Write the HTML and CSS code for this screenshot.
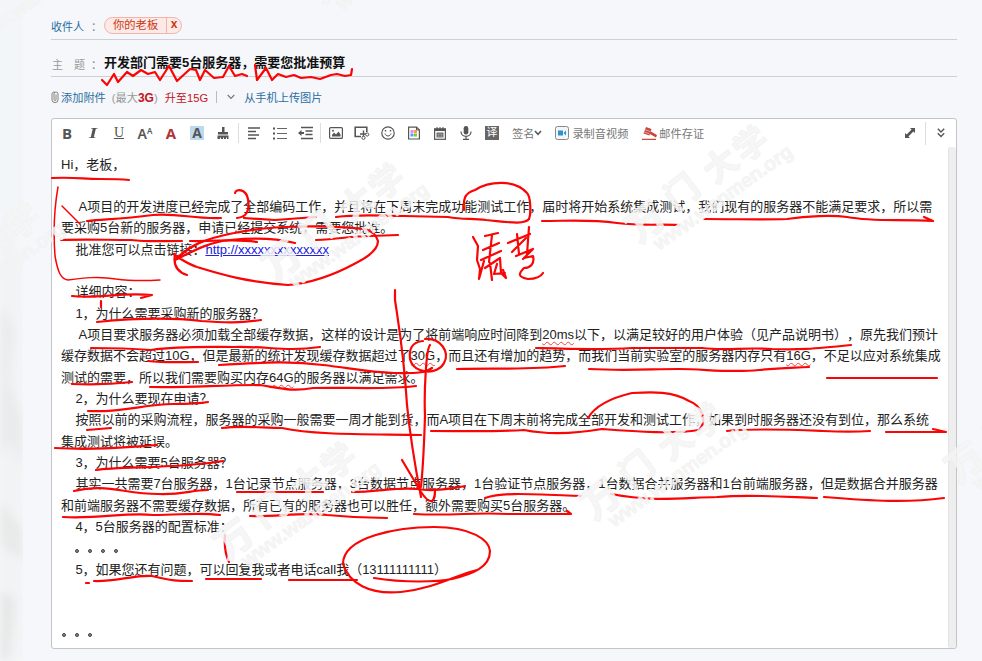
FILE: index.html
```html
<!DOCTYPE html>
<html lang="zh-CN">
<head>
<meta charset="utf-8">
<title>写信</title>
<link rel="stylesheet" href="styles.css">
</head>
<body>
<div class="page">
  <aside class="scenery">
    <svg width="23" height="661" viewBox="0 0 23 661">
      <defs><filter id="soft"><feGaussianBlur stdDeviation="4"/></filter></defs>
      <g filter="url(#soft)">
        <path d="M0 215 L12 235 L23 270 V661 H0Z" fill="#f1f3f4"/>
        <path d="M0 300 L14 330 L8 380 L23 420 V470 L10 440 L0 460Z" fill="#e9ebec"/>
        <path d="M0 500 L23 530 V560 L0 545Z" fill="#e8eaea"/>
        <path d="M0 590 L16 600 L8 661 H0Z" fill="#e6e8e8"/>
      </g>
    </svg>
  </aside>
  <main class="compose">
    <div class="row row-to">
      <span class="label link">收件人</span><span class="colon">：</span>
      <span class="chip"><span class="chip-name">你的老板</span><span class="chip-x">x</span></span>
    </div>
    <div class="row row-subject">
      <span class="label spread"><span>主</span><span>题</span></span><span class="colon">：</span>
      <strong class="subject">开发部门需要5台服务器，需要您批准预算</strong>
    </div>
    <div class="attach">
      <svg class="clip" width="8" height="12" viewBox="0 0 8 12"><path d="M1 3v6a3 2.6 0 0 0 6 0V3a2 2 0 0 0-4 0v5.500a1 1 0 0 0 2 0V3.500M1 3a2 2 0 0 1 3-1.700" fill="none" stroke="#777" stroke-width=".9"/></svg>
      <span class="link">添加附件</span>
      <span class="limit">(最大<b>3G</b>)</span>
      <span class="upgrade">升至15G</span>
      <span class="bar"></span>
      <svg class="chev" width="8" height="6" viewBox="0 0 8 6"><path d="M.7 1 4 4.300 7.300 1" fill="none" stroke="#777" stroke-width="1.200"/></svg>
      <span class="link">从手机上传图片</span>
    </div>
    <section class="editor">
      <div class="toolbar">
        <span class="tool bold">B</span>
        <span class="tool italic">I</span>
        <span class="tool under">U</span>
        <span class="tool size">A<sup>A</sup></span>
        <span class="tool color">A</span>
        <span class="tool"><span class="mark">A</span></span>
        <span class="tool"><svg width="12" height="14" viewBox="1 0 12 14" fill="#555"><path d="M6 1h2.500v5H12v2.500H2V6h4zM1.500 9.500h11V13H11v-1.500h-1V13H8v-1.500H7V13H5v-1.500H4V13H1.500z"/></svg></span>
        <span class="sep"></span>
        <span class="tool"><svg width="14" height="14" viewBox="0 0 14 14"><path d="M1 2h12M1 5.500h8M1 9h11M1 12.500h8" stroke="#555" stroke-width="1.700"/></svg></span>
        <span class="tool"><svg width="14" height="14" viewBox="0 0 14 14"><path d="M4 2.500h10M4 7.500h10M4 12.500h10" stroke="#666" stroke-width="1.200"/><path d="M0 2.500h2M0 7.500h2M0 12.500h2" stroke="#555" stroke-width="2"/></svg></span>
        <span class="tool narrow"><svg width="15" height="14" viewBox="0 0 15 14"><path d="M3 1.500h12M7.500 5h7M7.500 8.500h7M3 12.500h12" stroke="#555" stroke-width="1.600"/><path d="M0 7l3.500-3v2H6v2H3.500v2z" fill="#555"/></svg></span>
        <span class="sep"></span>
        <span class="tool"><svg width="14" height="12" viewBox="0 0 14 12"><rect x=".6" y=".6" width="12.800" height="10.800" rx="1" fill="#fff" stroke="#555" stroke-width="1.200"/><path d="M3 9.500V8l2-2.500 2 2 2.500-3 2 3v2z" fill="#555"/><circle cx="4" cy="3.700" r="1" fill="#555"/></svg></span>
        <span class="tool"><svg width="16" height="14" viewBox="0 0 16 14"><path d="M7 10.500H1.200V1.200h11.600V6" fill="none" stroke="#555" stroke-width="1.600"/><path d="M9.500 4.500v7M6 8h7" stroke="#555" stroke-width="1.400"/><circle cx="13.200" cy="8.500" r="1.600" fill="#fff" stroke="#555"/><circle cx="9.500" cy="11.800" r="1.600" fill="#fff" stroke="#555"/></svg></span>
        <span class="tool"><svg width="14" height="14" viewBox="0 0 14 14" fill="none" stroke="#555"><circle cx="7" cy="7" r="6.200" stroke-width="1.200"/><path d="M4 7.500c.5 3.300 5.500 3.300 6 0"/><path d="M4.500 4v1.500M9.500 4v1.500" stroke-width="1.400"/></svg></span>
        <span class="tool"><svg width="12" height="14" viewBox="0 0 12 14"><path d="M.6 1.200h8L11.400 4v9H.6z" fill="#fff" stroke="#555" stroke-width="1.200"/><path d="M8.500 1v3h3" fill="none" stroke="#555"/><path d="M2.500 4h3v3h-3z" fill="#e68be0"/><path d="M6 4h3v3H6z" fill="#ff9b31"/><path d="M2.500 7.500h3v3h-3z" fill="#45a9ef"/><path d="M6 7.500h3v3H6z" fill="#7bc943"/></svg></span>
        <span class="tool"><svg width="12" height="13" viewBox="0 0 12 13"><rect x=".6" y="1.800" width="10.800" height="10.500" fill="#fff" stroke="#555" stroke-width="1.200"/><path d="M0 2h12v2H0z" fill="#555"/><path d="M3 0v3M6 0v3M9 0v3" stroke="#555"/><path d="M2.500 5.500h7v5h-7z" fill="#666"/><path d="M4.800 5v6M7.200 5v6M2 7.300h8M2 9.200h8" stroke="#bbb" stroke-width=".4"/></svg></span>
        <span class="tool"><svg width="12" height="14" viewBox="0 0 12 14"><rect x="3.700" y="0" width="4.600" height="8.500" rx="2.300" fill="#555"/><path d="M1 5.500C1 12 11 12 11 5.500M6 10v3M3 13.300h6" fill="none" stroke="#555" stroke-width="1.200"/></svg></span>
        <span class="tool"><span class="translate">译</span></span>
        <span class="text-tool sign">签名<svg width="8" height="6" viewBox="0 0 8 6"><path d="M1 1 4 4.300 7 1" fill="none" stroke="#555" stroke-width="1.500"/></svg></span>
        <span class="text-tool video"><svg width="14" height="14" viewBox="0 0 14 14"><rect x=".5" y=".5" width="13" height="13" rx="2" fill="#f5f5f5" stroke="#888"/><path d="M3 4.500h5v5H3zM8.500 7 11 4.500v5z" fill="#2f92d0"/></svg>录制音视频</span>
        <span class="text-tool proof"><svg width="15" height="14" viewBox="0 0 15 14"><path d="M4 1 9.500 3 7.500 9.500 1.500 7.500zM8 5l7 4-1 2.500-7-4zM0 12.700h14V14H0z" fill="#c9473f"/><path d="M3 3.700 8.500 5.600M2.300 6l5.200 1.800" stroke="#fff" stroke-width=".5"/></svg>邮件存证</span>
        <span class="grow"></span>
        <svg class="expand" width="10" height="10" viewBox="0 0 10 10"><path d="M5 0h5v5L8.400 3.400 3.400 8.400 5 10H0V5l1.600 1.600 5-5z" fill="#555"/></svg>
        <span class="sep tall"></span>
        <svg class="more" width="8" height="10" viewBox="0 0 8 10"><path d="M.8.800 4 4l3.200-3.200M.8 5.300 4 8.500l3.200-3.200" fill="none" stroke="#555" stroke-width="1.400"/></svg>
      </div>
      <div class="content">
        <div class="letter">
          <p>Hi，老板，</p>
          <p></p>
          <p class="in2">A项目的开发进度已经完成了全部编码工作，并且将在下周末完成功能测试工作，届时将开始系统集成测试，我们现有的服务器不能满足要求，所以需</p>
          <p>要采购5台新的服务器，申请已经提交系统，需要您批准。</p>
          <p class="in">批准您可以点击链接：<a class="url">http://xxxxxxxxxxxxxx</a></p>
          <p></p>
          <p class="in">详细内容：</p>
          <p class="in">1，为什么需要采购新的服务器？</p>
          <p class="in2">A项目要求服务器必须加载全部缓存数据，这样的设计是为了将前端响应时间降到<span class="sp">20ms</span>以下，以满足较好的用户体验（见产品说明书），原先我们预计</p>
          <p>缓存数据不会超过10G，但是最新的统计发现缓存数据超过了<span class="sp">30G</span>，而且还有增加的趋势，而我们当前实验室的服务器内存只有<span class="sp">16G</span>，不足以应对系统集成</p>
          <p>测试的需要，所以我们需要购买内存<span class="sp">64G</span>的服务器以满足需求。</p>
          <p class="in">2，为什么要现在申请？</p>
          <p class="in">按照以前的采购流程，服务器的采购一般需要一周才能到货，而A项目在下周末前将完成全部开发和测试工作，如果到时服务器还没有到位，那么系统</p>
          <p>集成测试将被延误。</p>
          <p class="in">3，为什么需要5台服务器？</p>
          <p class="in">其实一共需要7台服务器，1台记录节点服务器，3台数据节点服务器，1台验证节点服务器，1台数据合并服务器和1台前端服务器，但是数据合并服务器</p>
          <p>和前端服务器不需要缓存数据，所有已有的服务器也可以胜任，额外需要购买5台服务器。</p>
          <p class="in">4，5台服务器的配置标准：</p>
          <p class="in dots"><i></i><i></i><i></i><i></i></p>
          <p class="in">5，如果您还有问题，可以回复我或者电话call我（13111111111）</p>
          <p></p>
          <p></p>
          <p class="dots last"><i></i><i></i><i></i></p>
        </div>
        <div class="scrollbar"></div>
      </div>
    </section>
  </main>

  <svg class="overlay" width="982" height="661" viewBox="0 0 982 661">
    <g class="ink">
      <path d="M102 80l5 5 7-11 4 8 9-10 6 4 8-6 7 4 7-2 5 8 9-14 8 15 13-12 6 1 4 10 5-10 9 8 9-1 6-11 6 10 7-2 5 2"/>
      <path d="M255 65l2 15 9-12 6 12 6-6 8 3 8-2 7 3 10-1 9 2 11-4 6-1 8 2 6-1 1-6"/>
      <path d="M52 178c25-1 30 1 48 1s20 0 29 1"/>
      <path d="M58 187c-3 17-5 42-3 69 3 17 6 23 13 24 15-2 30-4 48-1 15 2 25 2 44 1M62 206l18 18" class="fine"/>
      <path d="M87 221c22-2 35-2 66-6 25-2 40 4 68 3M235 193c1-5 11-4 13 6 2 13-2 18-11 19M244 218l31 2 41-3M336 217c25-3 45-1 68-1l44 1c15 3 25 1 38 3 22 2 38 5 43-1 2-5 2-22-2-26-12-14-38-12-52-3-10 3-12 8-11 20"/>
      <path d="M542 221c25 0 46-2 75 2 25 3 40 1 62 2M704 219c35 0 55 1 83 0 20-3 45-4 60-2 28 5 50 2 86 4M924 217l9 4"/>
      <path d="M61 240c25-1 45 0 70 0 18 2 28 1 51 1M190 241c25 1 45-3 67 1M316 240c25-1 35-4 54-4l28-1"/>
      <path d="M187 275c-10-3-14-10-12-21-5-2 10 9 22 13 26 8 50 15 91 18 25-2 46-10 68-22 16-8 22-15 22-22-2-6-5-10-14-12-35-4-95-4-130 4-30 6-44 12-59 27 18-9 34-18 55-20 20-2 41-3 65 3"/>
      <path d="M473 237l5 9-1 14 3 9-1 10 5-18M485 236l13-3M483 250l16-7M481 260l20-9M492 235l-3 27M485 268l15-10 1 15 5 5-3-8M490 263l2 17M497 264l-3 10 11-1M508 243l22-9M517 234l2 20M512 252l14-14M529 227l-2 27M516 256l17-7-10 10M524 258l9-2c2 8-3 12-9 12-6 6-6 9 4 11 7 0 12-1 15-6"/>
      <path d="M72 296c27 3 47-4 80-1l-11 3M101 301v6M97 322c40-4 70-5 104-1 26 2 38 2 60-1M91 348c28 0 33 0 60 2 28-4 55-3 83-3 34-1 51 5 86 0"/>
      <path d="M148 361c18 2 33 1 50 1M219 365c50-3 74-4 104 0 27 3 44 7 71 8 18 0 30 1 38-5M395 290v10c4 27 9 55 12 105 4 40 9 66 14 92M430 345c-4 4-6 49-5 70-1 35-2 52-4 72M402 460l19 32c4 6 8 10 11 9 3-2 3-6 3-12"/>
      <path d="M423 341c-12 1-14 9-13 18 4 16 28 16 34 4 6-11-3-25-19-24"/>
      <path d="M536 348c35 1 65 2 96 0h70c25 3 40-1 70 1 26 1 40 0 79-4M457 369c35-1 70 1 108-3M589 369c37 2 62 0 90 0 26 0 50 4 80 1 20-2 30-2 50-3M827 378h110"/>
      <path d="M72 384c20 1 43 0 60-2M150 387c35 1 70-2 110-2 20 3 32 7 53 3 35-1 70 2 103-2M88 411c35 2 55-7 85-7 17 0 24 0 35-2M87 430l24-2M222 428c20-3 41 0 60 0 32 7 82 6 139 7"/>
      <path d="M431 431c30 0 60 1 93-1 25 5 55 3 78-1 38 3 72 5 97 1 8-8 4-24-10-29-17-10-36-9-57-8-17 4-36 11-44 25M727 431c27-3 72-1 96 0 24 1 29 1 47 0M886 432h60l-13-3"/>
      <path d="M55 448c35 2 65 0 102-3M96 470c24-4 80-1 127-9M74 491c32-8 50 3 84 3 25 1 33-4 50-4M237 492l86 0M352 492c25 0 45-5 65-3 18 3 35-1 48-3M485 498c18-6 43-4 96-2M611 494c42 8 68 4 106 3 35-3 70 0 100 1M824 497c50 4 84 6 120 1"/>
      <path d="M63 517c37 2 63-5 90-2 30 0 44-3 67 0M250 516c25 1 53-4 77-1 20 2 32 3 60 3M414 514c40 2 60-2 94 0h63l-4-3"/>
      <path d="M225 535c-1 12 0 19 4 27M86 583h3M94 581c20 1 40-6 58-5 20 5 26 5 40 5M206 579h55M289 580l68 0M374 578c30 5 64 4 78 1 21-5 38-12 38-28-1-11-18-24-56-24-34 0-91 9-91 37 6 19 26 31 58 28 35-4 55-17 76-22"/>
    </g>
    <defs>
      <g id="mark">
        <text x="-20" y="13" transform="translate(647 222) rotate(-38)" font-size="38">万</text>
        <text x="-18" y="13" transform="translate(682 191) rotate(-38)" font-size="34">门</text>
        <text x="-18" y="13" transform="translate(721 164) rotate(-38)" font-size="34">大</text>
        <text x="-18" y="13" transform="translate(751 143) rotate(-38)" font-size="34">学</text>
        <text class="mark-url" transform="translate(659 251) rotate(-35.500)" textLength="166">www.wanmen.org</text>
      </g>
    </defs>
    <g class="watermarks">
      <use href="#mark"/>
      <use href="#mark" x="-364" y="38"/>
      <use href="#mark" x="-412" y="317"/>
      <use href="#mark" x="-45" y="277"/>
      <use href="#mark" x="319" y="240"/>
      <use href="#mark" x="-728" y="77"/>
      <use href="#mark" x="-317" y="-240"/>
      <use href="#mark" x="-684" y="-202"/>
    </g>
  </svg>
</div>
</body>
</html>
```

FILE: styles.css
```css
* { box-sizing: border-box; }
body {
  margin: 0;
  width: 982px;
  height: 661px;
  overflow: hidden;
  background: #f5f7fb;
  font-family: "Liberation Sans", "Noto Sans CJK SC", sans-serif;
  font-size: 13px;
  color: #222;
  text-spacing-trim: space-all;
}
.page { position: relative; display: flex; height: 661px; }
.scenery { width: 23px; background: linear-gradient(#f3f6f9 0 200px, #f7f8f8 300px); }
.scenery svg { display: block; }
.compose {
  flex: 1;
  padding: 0 25px 0 28px;
  display: flex;
  flex-direction: column;
}
.row {
  display: flex;
  align-items: center;
  border-bottom: 1px solid #cdcfd2;
  font-size: 11px;
  white-space: nowrap;
}
.row-to { height: 40px; padding-top: 12px; }
.row-subject { height: 37px; padding-top: 12px; }
.link { color: #2b6e9f; }
.label { width: 36px; }
.spread { color: #999; display: flex; justify-content: space-between; padding: 0 2px 0 1px; }
.colon { width: 17px; color: #888; padding-left: 4px; }
.chip {
  display: flex;
  align-items: center;
  height: 17px;
  border: 1px solid #f3b3ad;
  border-radius: 9px;
  background: #fde9e6;
  color: #c93a12;
  overflow: hidden;
  line-height: 15px;
}
.chip-name { padding: 0 8px; width: 61px; font-size: 11.300px; }
.chip-x { width: 15px; height: 15px; border-left: 1px solid #f3b3ad; font-weight: bold; text-align: center; line-height: 13px; font-size: 12px; }
.subject { font-size: 13px; color: #111; line-height: 16px; margin-top: -3px; }
.attach {
  height: 41px;
  padding-bottom: 2px;
  display: flex;
  align-items: center;
  font-size: 11.200px;
  white-space: nowrap;
}
.clip { margin-right: 2px; }
.limit { color: #999; margin-left: 6px; }
.limit b { color: #c5121a; font-size: 12px; }
.upgrade { color: #c5121a; margin-left: 7px; }
.bar { width: 1px; height: 12px; background: #bbb; margin-left: 8px; }
.chev { margin: 0 9px 0 10px; }
.editor {
  width: 906px;
  height: 531px;
  border: 1px solid #c3c4c6;
  border-radius: 3px;
  background: #fff;
  display: flex;
  flex-direction: column;
}
.toolbar { display: flex; align-items: center; height: 28px; padding: 0 13px 0 2px; color: #555; }
.tool { width: 26px; height: 20px; display: flex; align-items: center; justify-content: center; font-size: 14px; }
.tool.narrow { width: 25px; }
.bold { font: bold 15px "Open Sans", sans-serif; }
.italic { font: italic bold 15px "Liberation Serif", serif; transform: scaleX(1.400); }
.under { font: 14px "Liberation Serif", serif; text-decoration: underline; }
.size { font: 14px "Noto Sans", sans-serif; font-weight: 600; }
.size sup { font-size: 8px; line-height: 1; margin-top: -5px; }
.color { color: #b03336; font: bold 15px "Open Sans", sans-serif; }
.mark { width: 14px; height: 14px; background: #bcd9ee; text-align: center; font: bold 14px/14px "Open Sans", sans-serif; }
.translate { width: 14px; height: 14px; background: #666; color: #fff; font-size: 11px; line-height: 13px; text-align: center; }
.sep { width: 5px; height: 20px; background: linear-gradient(#ddd, #ddd) center / 1px 100% no-repeat; }
.sep.tall { height: 23px; margin: 0 9px 0 8px; }
.text-tool { display: flex; align-items: center; font-size: 11.200px; color: #777; white-space: nowrap; }
.sign { margin-left: 7px; }
.video { margin-left: 13px; gap: 3px; }
.proof { margin-left: 14px; gap: 2px; }
.grow { flex: 1; }
.more { margin-right: -2px; }
.content { flex: 1; display: flex; min-height: 0; }
.letter { flex: 1; min-width: 0; padding: 6.500px 0 0 9px; }
.letter p { margin: 0; height: 21.340px; line-height: 21px; white-space: nowrap; }
.letter .in { padding-left: 14.400px; }
.letter .in2 { padding-left: 17.500px; }
.url { color: #2020dd; text-decoration: underline; }
.sp { text-decoration: underline wavy #ef4444 .7px; text-underline-offset: 2px; }
.dots { display: flex; align-items: center; gap: 9px; }
.dots i { width: 4px; height: 4px; border: 1px solid #444; border-radius: 50%; background: #888; }
.letter .dots { padding-top: 5px; }
.letter .dots.last { padding: 4px 0 0 1px; }
.scrollbar { width: 8px; background: #eee; border-left: 1px solid #e2e2e2; border-radius: 3px; }
.overlay { position: absolute; left: 0; top: 0; pointer-events: none; }
.ink { fill: none; stroke: #fa0505; stroke-width: 2.200; stroke-linecap: round; stroke-linejoin: round; }
.ink .fine { stroke-width: 1.500; }
.watermarks { fill: #f5f5f5; fill-opacity: .85; stroke: #f1f1f1; stroke-width: .5; font-family: "Noto Sans CJK SC", sans-serif; font-weight: 900; }
.mark-url { font: bold 20px "Liberation Sans", sans-serif; }
```
